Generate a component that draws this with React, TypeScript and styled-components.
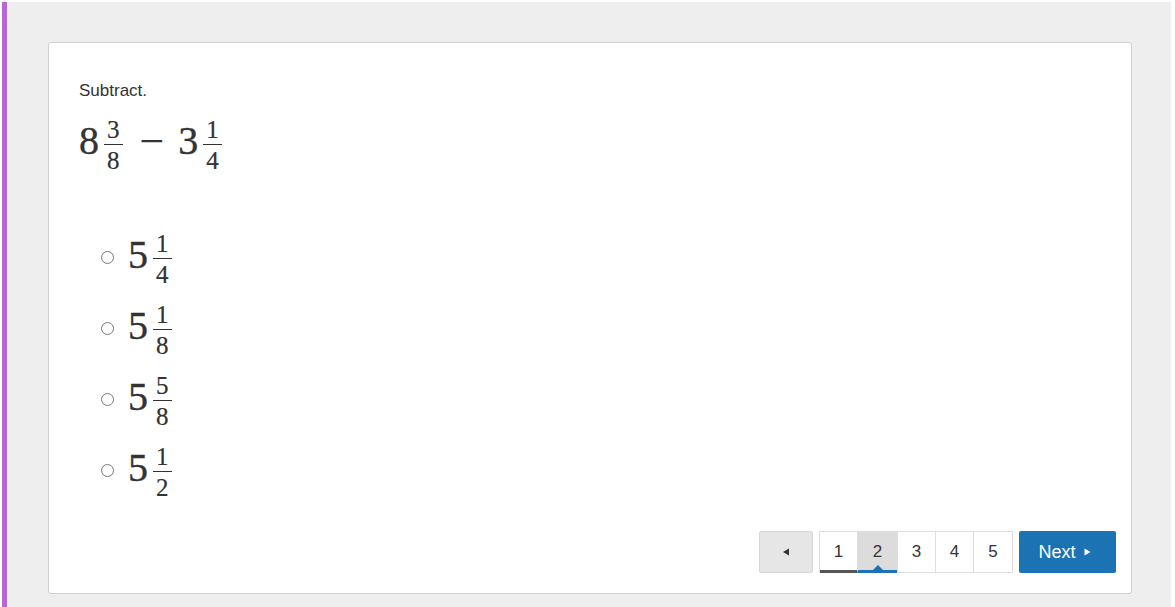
import React from "react";
import styled, { createGlobalStyle } from "styled-components";

const Global = createGlobalStyle`
  html, body { margin: 0; padding: 0; background: #ffffff; }
  body { font-family: "Liberation Sans", Arial, sans-serif; }
  * { box-sizing: border-box; }
`;

const Frame = styled.div`
  margin: 2px 4px 0 2px;
  height: 605px;
  background: #eeeeee;
  border-left: 5px solid #b667d2;
  padding: 40px 39px 0 41px;
`;

const Card = styled.div`
  background: #ffffff;
  border: 1px solid #cfcfcf;
  border-radius: 3px;
  height: 552px;
  padding: 38px 15px 20px 30px;
  display: flex;
  flex-direction: column;
`;

const Prompt = styled.div`
  font-size: 17px;
  color: #333333;
  line-height: 20px;
`;

const MathRow = styled.div<{ $top?: number }>`
  display: flex;
  align-items: center;
  font-family: "Liberation Serif", "Times New Roman", serif;
  color: #333333;
  margin-top: ${(p) => p.$top ?? 0}px;
  height: 62px;
`;

const Whole = styled.span`
  font-size: 40px;
  line-height: 40px;
  padding-bottom: 10px;
  -webkit-text-stroke: 0.4px #333333;
`;

const FracBox = styled.span`
  display: inline-flex;
  flex-direction: column;
  align-items: center;
  margin-left: 5px;
  font-size: 25px;
  -webkit-text-stroke: 0.2px #333333;
`;

const Num = styled.span`
  line-height: 22px;
  padding: 0 3px 3px;
`;

const Bar = styled.span`
  align-self: stretch;
  height: 1px;
  background: #333333;
`;

const Den = styled.span`
  line-height: 24px;
  padding: 4px 3px 0;
`;

const Minus = styled.span`
  font-size: 44px;
  margin: 0 14px 0 17px;
  line-height: 44px;
  padding-bottom: 8px;
`;

const Options = styled.div`
  display: flex;
  flex-direction: column;
  margin-top: 52px;
  margin-left: 22px;
  gap: 9px;
`;

const Option = styled.label`
  display: flex;
  align-items: center;
  height: 62px;
`;

const Radio = styled.input`
  margin: 0 14px 6px 0;
  width: 13px;
  height: 13px;
`;

const Footer = styled.div`
  margin-top: auto;
  display: flex;
  justify-content: flex-end;
  align-items: stretch;
  gap: 6px;
`;

const PrevBtn = styled.button`
  width: 54px;
  height: 42px;
  background: #e6e6e6;
  border: 1px solid #d8d8d8;
  border-radius: 2px;
  display: flex;
  align-items: center;
  justify-content: center;
  color: #333;
  padding: 0;
`;

const Pages = styled.div`
  display: flex;
  height: 42px;
  border: 1px solid #dddddd;
  border-bottom: none;
`;

const Page = styled.div<{ $active?: boolean; $done?: boolean; $w: number }>`
  position: relative;
  width: ${(p) => p.$w}px;
  display: flex;
  align-items: center;
  justify-content: center;
  font-size: 17px;
  color: #333333;
  background: ${(p) => (p.$active ? "#dcdcdc" : "#ffffff")};
  border-left: 1px solid #dddddd;
  &:first-child { border-left: none; }
  border-bottom: 3px solid ${(p) => (p.$active ? "#1c73b4" : p.$done ? "#555555" : "#dddddd")};
  border-bottom-width: ${(p) => (p.$active || p.$done ? 3 : 1)}px;
  padding-top: ${(p) => (p.$active || p.$done ? 2 : 0)}px;
`;

const Caret = styled.span`
  position: absolute;
  bottom: 0;
  left: 50%;
  transform: translateX(-50%);
  width: 0;
  height: 0;
  border-left: 5px solid transparent;
  border-right: 5px solid transparent;
  border-bottom: 5px solid #1c73b4;
`;

const NextBtn = styled.button`
  width: 97px;
  height: 42px;
  background: #1c73b4;
  color: #ffffff;
  border: none;
  border-radius: 2px;
  font-family: "Liberation Sans", Arial, sans-serif;
  font-size: 18px;
  display: flex;
  align-items: center;
  justify-content: center;
  gap: 8px;
  padding: 0 6px 0 0;
`;

const Frac = ({ n, d }: { n: string; d: string }) => (
  <FracBox>
    <Num>{n}</Num>
    <Bar />
    <Den>{d}</Den>
  </FracBox>
);

const options = [
  ["1", "4"],
  ["1", "8"],
  ["5", "8"],
  ["1", "2"],
];

export default function App() {
  return (
    <>
      <Global />
      <Frame>
        <Card>
          <Prompt>Subtract.</Prompt>
          <MathRow $top={14}>
            <Whole>8</Whole>
            <Frac n="3" d="8" />
            <Minus>−</Minus>
            <Whole>3</Whole>
            <Frac n="1" d="4" />
          </MathRow>
          <Options>
            {options.map(([n, d], i) => (
              <Option key={i}>
                <Radio type="radio" name="ans" />
                <MathRow>
                  <Whole>5</Whole>
                  <Frac n={n} d={d} />
                </MathRow>
              </Option>
            ))}
          </Options>
          <Footer>
            <PrevBtn aria-label="previous">
              <svg width="8" height="8" viewBox="0 0 8 8">
                <path d="M1 4 L7 0.5 L7 7.5 Z" fill="#333" />
              </svg>
            </PrevBtn>
            <Pages>
              <Page $w={37} $done>1</Page>
              <Page $w={40} $active>
                2
                <Caret />
              </Page>
              <Page $w={38}>3</Page>
              <Page $w={38}>4</Page>
              <Page $w={39}>5</Page>
            </Pages>
            <NextBtn>
              Next
              <svg width="7" height="8" viewBox="0 0 7 8">
                <path d="M0.5 0.5 L6.5 4 L0.5 7.5 Z" fill="#fff" />
              </svg>
            </NextBtn>
          </Footer>
        </Card>
      </Frame>
    </>
  );
}
